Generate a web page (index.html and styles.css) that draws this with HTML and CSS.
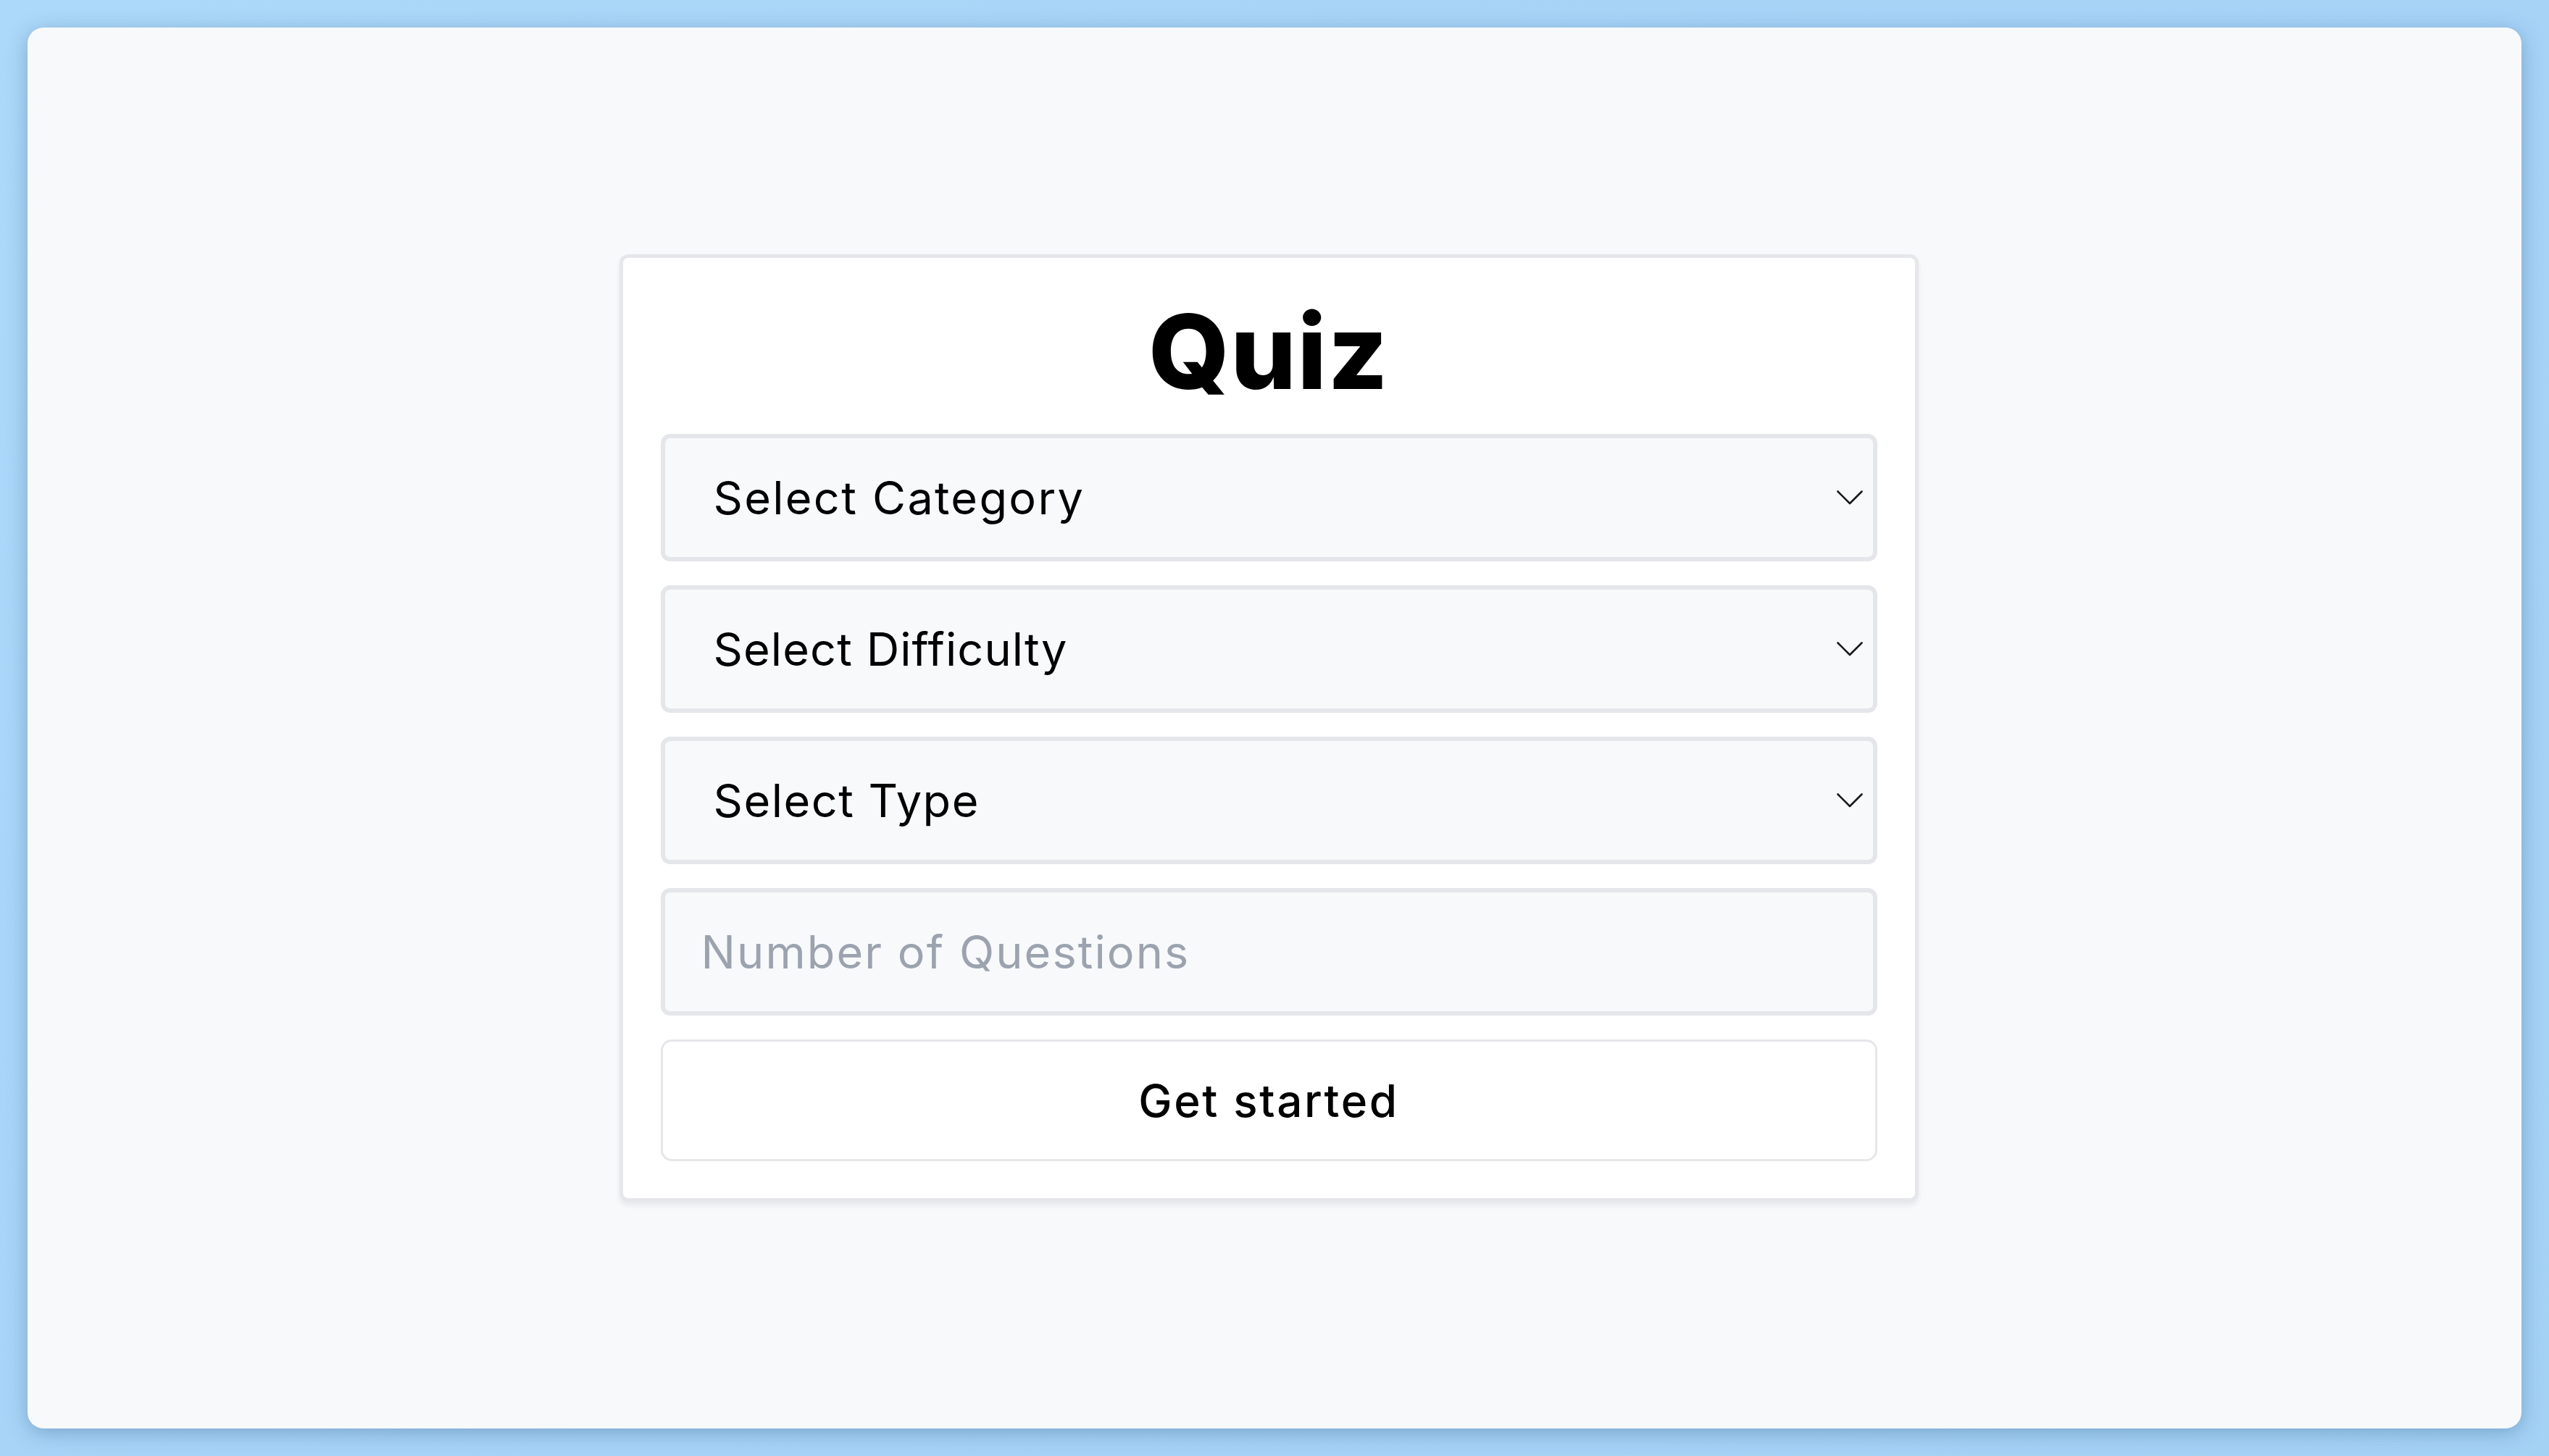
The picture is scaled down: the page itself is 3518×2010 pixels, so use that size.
FILE: index.html
```html
<!DOCTYPE html>
<html lang="en">
<head>
<meta charset="utf-8">
<title>Quiz</title>
<link rel="stylesheet" href="styles.css">
</head>
<body>
  <div class="window">
    <form class="card">
      <h1 class="title">Quiz</h1>
      <div class="field">
        <select class="select">
          <option>Select Category</option>
        </select>
        <svg class="chevron" viewBox="0 0 36 20" aria-hidden="true"><polyline points="1.5,1.5 18,18 34.5,1.5"/></svg>
      </div>
      <div class="field">
        <select class="select select--difficulty">
          <option>Select Difficulty</option>
        </select>
        <svg class="chevron" viewBox="0 0 36 20" aria-hidden="true"><polyline points="1.5,1.5 18,18 34.5,1.5"/></svg>
      </div>
      <div class="field">
        <select class="select select--type">
          <option>Select Type</option>
        </select>
        <svg class="chevron" viewBox="0 0 36 20" aria-hidden="true"><polyline points="1.5,1.5 18,18 34.5,1.5"/></svg>
      </div>
      <input class="input" type="number" placeholder="Number of Questions">
      <button class="button" type="button">Get started</button>
    </form>
  </div>
</body>
</html>
```

FILE: styles.css
```css
* { box-sizing: border-box; }

html, body {
  margin: 0;
  height: 100%;
}

body {
  background: linear-gradient(135deg, #acd8f9 0%, #a6d3f6 50%, #a4d2f5 100%);
  padding: 38px;
  font-family: Inter, "Noto Sans", sans-serif;
  color: #000;
}

.window {
  height: 100%;
  background: #f8f9fb;
  border-radius: 22px;
  box-shadow: 0 6px 28px rgba(40, 80, 130, 0.35);
  display: flex;
  align-items: center;
  justify-content: center;
  padding-right: 16px;
}

.card {
  width: 1793px;
  background: #ffffff;
  border: 5px solid #e6e7ea;
  border-radius: 12px;
  box-shadow: 0 5px 7px rgba(0, 0, 0, 0.07);
  padding: 57px 52px 51px;
  display: flex;
  flex-direction: column;
  gap: 33px;
  margin: 0;
}

.title {
  margin: 0 0 10px;
  text-align: center;
  font-size: 143px;
  line-height: 1;
  font-weight: 800;
  letter-spacing: 1.5px;
}

.field {
  position: relative;
}

.select,
.input {
  display: block;
  width: 100%;
  height: 176px;
  margin: 0;
  background: #f8f9fb;
  border: 6px solid #e5e6ea;
  border-radius: 13px;
  font-family: inherit;
  font-size: 63px;
  color: #000;
  outline: none;
}

.select {
  appearance: none;
  -webkit-appearance: none;
  padding: 0 100px 0 67px;
  letter-spacing: 2.3px;
}

.select--difficulty {
  letter-spacing: 1.1px;
}

.select--type {
  letter-spacing: 1.5px;
}

.chevron {
  position: absolute;
  right: 20px;
  top: 78px;
  width: 36px;
  height: 20px;
  fill: none;
  stroke: #1a1a1a;
  stroke-width: 2.6;
  stroke-linecap: round;
  stroke-linejoin: round;
  pointer-events: none;
}

.input {
  padding: 0 50px;
  letter-spacing: 2.1px;
  -moz-appearance: textfield;
}

.input::-webkit-outer-spin-button,
.input::-webkit-inner-spin-button {
  -webkit-appearance: none;
  margin: 0;
}

.input::placeholder {
  color: #9ca3af;
}

.button {
  display: block;
  width: 100%;
  height: 168px;
  background: #ffffff;
  border: 3.5px solid #e6e7ea;
  border-radius: 15px;
  font-family: inherit;
  font-size: 62px;
  font-weight: 500;
  color: #000;
  letter-spacing: 2.6px;
  cursor: pointer;
}
```
